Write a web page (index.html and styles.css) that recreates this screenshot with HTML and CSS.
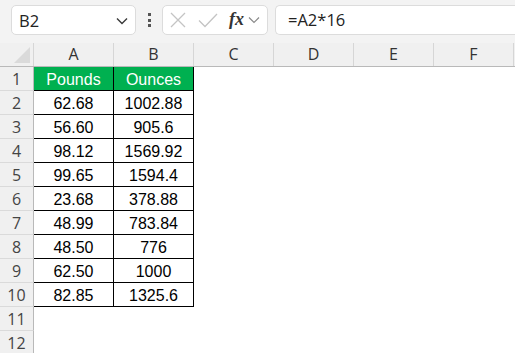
FILE: index.html
```html
<!DOCTYPE html>
<html>
<head>
<meta charset="utf-8">
<link rel="stylesheet" href="styles.css">
</head>
<body>
<div class="app">
  <div class="toolbar">
    <div class="namebox">
      <span class="nb-text">B2</span>
      <svg class="nb-chev" width="12" height="8" viewBox="0 0 12 8"><path d="M1 1.5 L6 6.5 L11 1.5" fill="none" stroke="#3a3a3a" stroke-width="1.4"/></svg>
    </div>
    <div class="dots"><span></span><span></span><span></span></div>
    <div class="fxbox">
      <svg class="ic-x" width="16" height="16" viewBox="0 0 16 16"><path d="M1 1 L15 15 M15 1 L1 15" stroke="#c4c4c4" stroke-width="1.3" fill="none"/></svg>
      <svg class="ic-check" width="20" height="15" viewBox="0 0 20 15"><path d="M1 7.5 L7 13.5 L19 1" stroke="#c4c4c4" stroke-width="1.3" fill="none"/></svg>
      <span class="fx">fx</span>
      <svg class="fx-chev" width="12" height="8" viewBox="0 0 12 8"><path d="M1 1.5 L6 6.5 L11 1.5" fill="none" stroke="#8a8a8a" stroke-width="1.2"/></svg>
    </div>
    <div class="formula">=A2*16</div>
  </div>
  <div class="sheet">
    <div class="row colhead">
      <div class="corner"><svg width="16" height="16" viewBox="0 0 16 16"><path d="M16 0 L16 16 L0 16 Z" fill="#dadada"/></svg></div>
      <div class="ch">A</div><div class="ch">B</div><div class="ch">C</div><div class="ch">D</div><div class="ch">E</div><div class="ch">F</div>
    </div>
    <div class="row"><div class="rh">1</div><div class="cell t head">Pounds</div><div class="cell t head">Ounces</div></div>
    <div class="row"><div class="rh">2</div><div class="cell t">62.68</div><div class="cell t">1002.88</div></div>
    <div class="row"><div class="rh">3</div><div class="cell t">56.60</div><div class="cell t">905.6</div></div>
    <div class="row"><div class="rh">4</div><div class="cell t">98.12</div><div class="cell t">1569.92</div></div>
    <div class="row"><div class="rh">5</div><div class="cell t">99.65</div><div class="cell t">1594.4</div></div>
    <div class="row"><div class="rh">6</div><div class="cell t">23.68</div><div class="cell t">378.88</div></div>
    <div class="row"><div class="rh">7</div><div class="cell t">48.99</div><div class="cell t">783.84</div></div>
    <div class="row"><div class="rh">8</div><div class="cell t">48.50</div><div class="cell t">776</div></div>
    <div class="row"><div class="rh">9</div><div class="cell t">62.50</div><div class="cell t">1000</div></div>
    <div class="row"><div class="rh">10</div><div class="cell t">82.85</div><div class="cell t">1325.6</div></div>
    <div class="row"><div class="rh">11</div></div>
    <div class="row"><div class="rh">12</div></div>
  </div>
</div>
</body>
</html>
```
FILE: styles.css
```css
* { box-sizing: border-box; }
html, body { margin: 0; padding: 0; }
body {
  width: 515px;
  height: 353px;
  overflow: hidden;
  background: #ffffff;
  font-family: "Open Sans", "Noto Sans", sans-serif;
}
.app { width: 515px; }
.toolbar {
  height: 43px;
  background: #f3f3f3;
  display: flex;
  align-items: flex-start;
  padding: 5px 0 0 11px;
}
.namebox {
  width: 125px;
  height: 30px;
  background: #fff;
  border: 1px solid #dcdcdc;
  border-radius: 5px;
  display: flex;
  align-items: center;
  justify-content: space-between;
  padding: 0 7px 0 7px;
}
.nb-text { font-size: 16.5px; color: #222; }
.nb-chev { margin-top: 1px; }
.dots {
  width: 26px;
  height: 30px;
  display: flex;
  flex-direction: column;
  align-items: center;
  justify-content: center;
  gap: 2.5px;
}
.dots span { width: 3px; height: 3px; background: #555; display: block; }
.fxbox {
  width: 106px;
  height: 30px;
  background: #fff;
  border: 1px solid #dcdcdc;
  border-radius: 5px;
  display: flex;
  align-items: center;
  padding: 0 0 0 7px;
}
.ic-x { margin-right: 12px; }
.ic-check { margin-right: 11px; }
.fx {
  font-family: "Liberation Serif", serif;
  font-style: italic;
  font-weight: bold;
  font-size: 18px;
  color: #333;
  margin-right: 4px;
  margin-top: -2px;
}
.formula {
  flex: 1;
  margin-left: 7px;
  height: 30px;
  background: #fff;
  border: 1px solid #dcdcdc;
  border-right: none;
  border-radius: 5px 0 0 5px;
  font-size: 16.5px;
  color: #222;
  padding: 2px 0 0 12px;
}
.sheet { width: 515px; }
.row { display: flex; height: 24px; }
.colhead { background: #f0f0f0; border-bottom: 1px solid #b9b9b9; }
.corner {
  width: 34px;
  border-right: 1px solid #d6d6d6;
  display: flex;
  align-items: flex-end;
  justify-content: flex-end;
  padding: 0 3px 3px 0;
}
.ch {
  width: 80px;
  border-right: 1px solid #d6d6d6;
  text-align: center;
  font-size: 16px;
  line-height: 23px;
  color: #333;
}
.rh {
  width: 34px;
  background: #f0f0f0;
  border-right: 1px solid #b9b9b9;
  border-bottom: 1px solid #dadada;
  text-align: center;
  font-size: 16px;
  line-height: 25px;
  color: #444;
}
.cell {
  width: 80px;
  text-align: center;
  font-family: "Liberation Sans", Arial, sans-serif;
  font-size: 16px;
  line-height: 25px;
  color: #000;
}
.t { border-right: 1px solid #000; border-bottom: 1px solid #000; }
.head { background: #00b050; color: #fff; }
```
